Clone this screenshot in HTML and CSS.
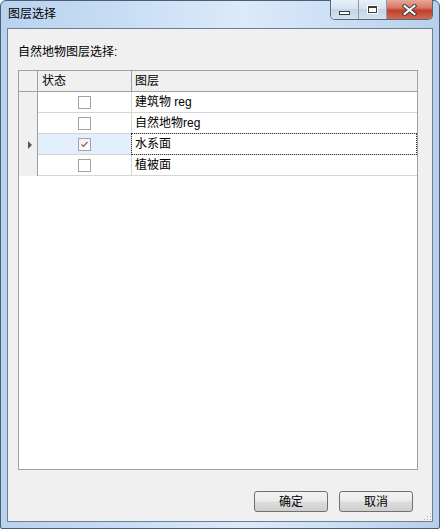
FILE: index.html
```html
<!DOCTYPE html>
<html lang="zh">
<head>
  <meta charset="UTF-8" />
  <title>图层选择</title>
  <link rel="stylesheet" href="styles.css">
</head>
<body>
  <div class="window">
    <div class="titlebar">
      <span class="title">图层选择</span>
      <div class="caption-btns">
        <span class="cbtn min"><i></i></span>
        <span class="cbtn max"><i></i></span>
        <span class="cbtn close">
          <svg width="15" height="12" viewBox="0 0 15 12">
            <path d="M2.5 2 L12.5 10 M12.5 2 L2.5 10" stroke="#3b3b3b" stroke-width="4" stroke-linecap="square"/>
            <path d="M2.5 2 L12.5 10 M12.5 2 L2.5 10" stroke="#ffffff" stroke-width="2" stroke-linecap="square"/>
          </svg>
        </span>
      </div>
    </div>

    <div class="client">
      <div class="caption">自然地物图层选择:</div>

      <div class="grid">
        <div class="row head">
          <div class="rh"></div>
          <div class="c1">状态</div>
          <div class="c2">图层</div>
        </div>
        <div class="row">
          <div class="rh"></div>
          <div class="c1"><span class="chk"></span></div>
          <div class="c2">建筑物 reg</div>
        </div>
        <div class="row">
          <div class="rh"></div>
          <div class="c1"><span class="chk"></span></div>
          <div class="c2">自然地物reg</div>
        </div>
        <div class="row current">
          <div class="rh"><span class="arrow"></span></div>
          <div class="c1">
            <span class="chk checked">
              <svg width="11" height="11" viewBox="0 0 11 11">
                <path d="M2.5 5.5 L4.5 7.5 L8.5 3" stroke="#6a6a6a" stroke-width="1.2" fill="none"/>
              </svg>
            </span>
          </div>
          <div class="c2 focus">水系面</div>
        </div>
        <div class="row">
          <div class="rh"></div>
          <div class="c1"><span class="chk"></span></div>
          <div class="c2">植被面</div>
        </div>
      </div>

      <div class="buttons">
        <button class="btn">确定</button>
        <button class="btn">取消</button>
      </div>

      <div class="grip"></div>
    </div>
  </div>
</body>
</html>
```

FILE: styles.css
```css
body {
  margin: 0;
  font-family: "Liberation Sans", "Noto Sans CJK SC", sans-serif;
  font-size: 12px;
  color: #000;
}

.window {
  width: 440px;
  height: 529px;
  box-sizing: border-box;
  border: 1px solid #4a5f75;
  border-radius: 6px 6px 2px 2px;
  background: linear-gradient(90deg, #b9d2ee 0%, #c6dcf4 25%, #dceaf9 55%, #cde0f5 75%, #b7cfea 100%);
  padding: 0 6px 6px 6px;
  display: flex;
  flex-direction: column;
}

.titlebar {
  height: 27px;
  display: flex;
  align-items: flex-start;
}

.title {
  margin: 5px 0 0 1px;
  line-height: 16px;
}

.caption-btns {
  margin-left: auto;
  margin-top: -1px;
  display: flex;
  border: 1px solid #56687c;
  border-top: none;
  border-radius: 0 0 5px 5px;
  overflow: hidden;
  height: 19px;
}

.cbtn {
  height: 19px;
  display: flex;
  align-items: center;
  justify-content: center;
  box-sizing: border-box;
}

.min,
.max {
  width: 28px;
  background: linear-gradient(180deg, #e9f1fa 0%, #d6e3f1 45%, #c3d4e8 50%, #d4e2f2 100%);
  border-right: 1px solid #8a9bb0;
}

.min i {
  display: block;
  width: 9px;
  height: 2px;
  border: 1px solid #3b3b3b;
  background: #fff;
  margin-top: 6px;
}

.max i {
  display: block;
  width: 7px;
  height: 4px;
  border: 1px solid #3b3b3b;
  border-top-width: 2px;
  background: #fff;
  outline: 1px solid #fff;
}

.close {
  width: 45px;
  background: linear-gradient(180deg, #e8a898 0%, #d57a66 40%, #c0402a 55%, #d26a50 100%);
}

.client {
  flex: 1;
  position: relative;
  border: 1px solid #6d8096;
  background: #f0f0f0;
  padding: 15px 14px 0 10px;
  display: flex;
  flex-direction: column;
}

.caption {
  line-height: 16px;
}

.grid {
  margin-top: 10px;
  width: 400px;
  height: 400px;
  box-sizing: border-box;
  border: 1px solid #a0a0a0;
  background: #fff;
}

.row {
  display: grid;
  grid-template-columns: 19px 94px 1fr;
  height: 21px;
}

.row > div {
  box-sizing: border-box;
  line-height: 20px;
}

.rh {
  background: #f0f0f0;
  border-right: 1px solid #a0a0a0;
  display: flex;
  align-items: center;
  justify-content: center;
}

.c1 {
  border-right: 1px solid #d5d5d5;
  border-bottom: 1px solid #d5d5d5;
  display: flex;
  align-items: center;
  justify-content: center;
}

.c2 {
  padding-left: 3px;
  border-bottom: 1px solid #d5d5d5;
}

.head > div {
  background: #f0f0f0;
  border-bottom: 1px solid #a0a0a0;
}

.head .c1 {
  justify-content: flex-start;
  padding-left: 4px;
  border-right-color: #a0a0a0;
}

.chk {
  width: 13px;
  height: 13px;
  box-sizing: border-box;
  border: 1px solid #a3a3a3;
  background: #fff;
  display: flex;
  align-items: center;
  justify-content: center;
  margin-left: -1px;
}

.chk.checked {
  background: linear-gradient(135deg, #f0f0f0, #ffffff);
}

.current .c1 {
  background: #e3effa;
}

.arrow {
  width: 0;
  height: 0;
  border-left: 4px solid #555;
  border-top: 4px solid transparent;
  border-bottom: 4px solid transparent;
  margin-left: 3px;
}

.focus {
  position: relative;
}

.focus::after {
  content: "";
  position: absolute;
  top: -1px;
  left: -1px;
  right: 0;
  bottom: -1px;
  border: 1px dotted #333;
}

.buttons {
  display: flex;
  justify-content: flex-end;
  gap: 11px;
  margin-top: 21px;
  padding-right: 5px;
}

.btn {
  width: 74px;
  height: 21px;
  font-family: "Liberation Sans", "Noto Sans CJK SC", sans-serif;
  font-size: 12px;
  color: #000;
  border: 1px solid #707070;
  border-radius: 3px;
  background: linear-gradient(180deg, #f2f2f2 0%, #ebebeb 48%, #dddddd 52%, #cfcfcf 100%);
  padding: 0;
  line-height: 18px;
}

.grip {
  position: absolute;
  right: 1px;
  bottom: 1px;
  width: 8px;
  height: 8px;
  background: radial-gradient(circle, #b5b5b5 0.8px, transparent 1px) 0 0 / 3px 3px;
  clip-path: polygon(100% 0, 100% 100%, 0 100%);
}
```
